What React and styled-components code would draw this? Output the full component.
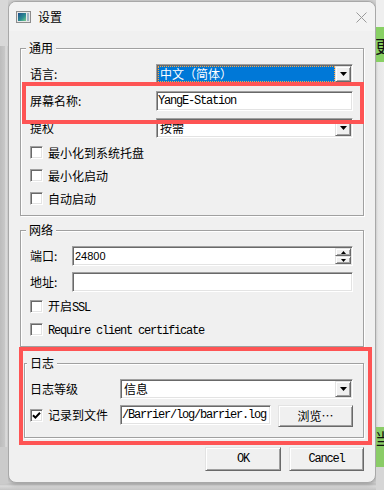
import React from 'react';
import styled, { createGlobalStyle, css } from 'styled-components';

const CJK = `"Noto Sans CJK SC", "Liberation Sans", sans-serif`;
const MONO = `"Liberation Mono", "Noto Sans CJK SC", monospace`;

const GlobalStyle = createGlobalStyle`
  *, *::before, *::after { box-sizing: border-box; }
  html, body { margin: 0; padding: 0; }
  body { background: #c8c8c8; font-family: ${CJK}; }
`;

const Page = styled.div`
  position: relative;
  width: 384px;
  height: 490px;
  overflow: hidden;
  display: flex;
  align-items: flex-start;
  background: linear-gradient(to bottom, #d4d4d4 0, #d4d4d4 483px, #c2c2c2 484px, #dadada 486px, #c4c4c4 490px);
`;

const LeftStrip = styled.div`
  flex: none;
  width: 8px;
  height: 483px;
  display: flex;
  flex-direction: column;
`;

const Seg = styled.div`
  flex: ${p => (p.$h ? 'none' : '1')};
  height: ${p => (p.$h ? `${p.$h}px` : 'auto')};
  background: ${p => p.$bg};
  overflow: hidden;
  position: relative;
`;

const RightStrip = styled.div`
  flex: none;
  width: 8px;
  height: 490px;
  display: flex;
  flex-direction: column;
`;

const BgGlyph = styled.span`
  display: block;
  margin-left: -1px;
  margin-top: ${p => p.$mt}px;
  font: ${p => p.$size}px/1 ${CJK};
  color: #111;
  white-space: nowrap;
`;

const Window = styled.div`
  flex: none;
  width: 368px;
  height: 482px;
  margin-top: 1px;
  border: 1px solid #a8a8a8;
  border-radius: 8px;
  background: #f0f0f0;
  box-shadow: 0 1px 5px rgba(0, 0, 0, 0.28);
  display: flex;
  flex-direction: column;
  overflow: hidden;
`;

const TitleBar = styled.div`
  flex: none;
  height: 29px;
  background: #f3f3f3;
  display: flex;
  align-items: center;
  padding: 0 8px 0 7px;
`;

const Title = styled.span`
  margin-left: 7px;
  font: 12px/16px ${CJK};
  color: #000;
`;

const CloseBtn = styled.span`
  margin-left: auto;
  display: flex;
  width: 11px;
  height: 11px;
  margin-top: 1px;
`;

const Body = styled.div`
  flex: 1;
  display: flex;
  flex-direction: column;
  padding: 17px 11px 0 11px;
`;

const Group = styled.div`
  position: relative;
  display: flex;
  flex-direction: column;
  margin-top: ${p => p.$mt || 0}px;
  margin-left: ${p => p.$ml || 0}px;
  padding: ${p => p.$pad};
  border: 1px solid #a0a0a0;
  box-shadow: inset 1px 1px #fff, 1px 1px #fff;
`;

const Legend = styled.span`
  position: absolute;
  top: -8px;
  left: ${p => p.$left}px;
  padding: 0 3px;
  background: #f0f0f0;
  font: 12px/14px ${CJK};
  color: #000;
`;

const FieldRow = styled.div`
  display: flex;
  align-items: ${p => p.$align || 'center'};
  height: ${p => p.$h || 20}px;
  margin-top: ${p => p.$mt || 0}px;
`;

const Label = styled.span`
  flex: none;
  width: ${p => p.$w}px;
  font: 12px/20px ${CJK};
  color: #000;
  white-space: nowrap;
`;

const sunken = css`
  background: #fff;
  border: 1px solid;
  border-color: #a0a0a0 #fff #fff #a0a0a0;
  box-shadow: inset 1px 1px #696969, inset -1px -1px #e3e3e3;
`;

const raised = css`
  background: #f0f0f0;
  border: 1px solid;
  border-color: #e3e3e3 #696969 #696969 #e3e3e3;
  box-shadow: inset 1px 1px #fff, inset -1px -1px #a0a0a0;
`;

const ComboBox = styled.div`
  ${sunken};
  flex: 1;
  height: 20px;
  display: flex;
  padding: 1px;
`;

const ComboValue = styled.span`
  flex: 1;
  font: 12px/14px ${CJK};
  white-space: nowrap;
  overflow: hidden;
  ${p =>
    p.$selected
      ? css`
          background: #0078d7;
          color: #fff;
          border: 1px dotted #ffa640;
          padding-left: 1px;
        `
      : css`
          color: #000;
          line-height: 16px;
          padding-left: 2px;
        `}
`;

const ArrowBtn = styled.span`
  ${raised};
  flex: none;
  width: 16px;
  height: 16px;
  display: flex;
  align-items: center;
  justify-content: center;
`;

const TextBox = styled.div`
  ${sunken};
  flex: ${p => (p.$w ? 'none' : '1')};
  width: ${p => (p.$w ? `${p.$w}px` : 'auto')};
  height: 20px;
  padding: 0 0 0 ${p => p.$pl ?? 2}px;
  display: flex;
  align-items: center;
  overflow: hidden;
  white-space: nowrap;
`;

const MonoText = styled.span`
  font: 12px/18px ${MONO};
  letter-spacing: -1.2px;
  color: #000;
`;

const SansText = styled.span`
  font: 11px/18px "Liberation Sans", sans-serif;
  color: #000;
`;

const SpinBtns = styled.span`
  margin-left: auto;
  flex: none;
  width: 16px;
  height: 16px;
  margin-right: 1px;
  display: flex;
  flex-direction: column;
`;

const SpinBtn = styled.span`
  ${raised};
  flex: 1;
  display: flex;
  align-items: center;
  justify-content: center;
`;

const CheckRow = styled.div`
  display: flex;
  align-items: center;
  height: ${p => p.$h || 23}px;
  width: ${p => (p.$w ? `${p.$w}px` : 'auto')};
  flex: none;
  margin-top: ${p => p.$mt || 0}px;
  gap: 5px;
`;

const Box = styled.span`
  ${sunken};
  flex: none;
  width: 13px;
  height: 13px;
  display: flex;
  align-items: center;
  justify-content: center;
`;

const CheckText = styled.span`
  font: 12px/16px ${CJK};
  color: #000;
  white-space: nowrap;
`;

const PushButton = styled.button`
  ${raised};
  flex: none;
  width: ${p => p.$w}px;
  height: ${p => p.$h}px;
  margin-left: ${p => p.$ml || 0}px;
  padding: 0;
  display: flex;
  align-items: center;
  justify-content: center;
  font: ${p => (p.$mono ? `12px/16px ${MONO}` : `12px/16px ${CJK}`)};
  letter-spacing: ${p => (p.$mono ? '-1.2px' : '0')};
  color: #000;
`;

const ButtonRow = styled.div`
  display: flex;
  justify-content: flex-end;
  gap: 8px;
  margin-top: 9px;
`;

const Annotation = styled.div`
  position: absolute;
  left: ${p => p.$x}px;
  top: ${p => p.$y}px;
  width: ${p => p.$w}px;
  height: ${p => p.$h}px;
  border: 4px solid #fe5454;
  pointer-events: none;
`;

const Latin = styled.span`
  font: 12px/16px ${MONO};
  letter-spacing: -1.2px;
`;

const DownArrow = () => (
  <svg width="7" height="4" viewBox="0 0 7 4">
    <path d="M0 0H7L3.5 4Z" fill="#000" />
  </svg>
);

const TinyArrow = ({ up }) => (
  <svg width="5" height="3" viewBox="0 0 5 3">
    <path d={up ? 'M0 3H5L2.5 0Z' : 'M0 0H5L2.5 3Z'} fill="#000" />
  </svg>
);

const Check = () => (
  <svg width="9" height="9" viewBox="0 0 9 9">
    <path d="M1 4.2L3.4 6.6L8 1.8" stroke="#000" strokeWidth="2" fill="none" />
  </svg>
);

const AppIcon = () => (
  <svg width="15" height="12" viewBox="0 0 15 12">
    <defs>
      <linearGradient id="ig" x1="0" y1="0" x2="1" y2="1">
        <stop offset="0" stopColor="#1d4f8c" />
        <stop offset="0.6" stopColor="#2e8f93" />
        <stop offset="1" stopColor="#7ccf8a" />
      </linearGradient>
    </defs>
    <rect x="0.5" y="0.5" width="14" height="11" fill="#e8e8e8" stroke="#8c8c8c" />
    <rect x="2" y="2" width="8" height="8" fill="url(#ig)" />
    <rect x="11" y="2" width="2" height="8" fill="#9fb4c4" />
  </svg>
);

const CloseIcon = () => (
  <svg width="11" height="11" viewBox="0 0 11 11">
    <path d="M0.5 0.5L10.5 10.5M10.5 0.5L0.5 10.5" stroke="#9a9a9a" strokeWidth="1" />
  </svg>
);

const Combo = ({ value, selected }) => (
  <ComboBox>
    <ComboValue $selected={selected}>{value}</ComboValue>
    <ArrowBtn>
      <DownArrow />
    </ArrowBtn>
  </ComboBox>
);

const CheckItem = ({ label, checked, mt, h, w }) => (
  <CheckRow $mt={mt} $h={h} $w={w}>
    <Box>{checked && <Check />}</Box>
    <CheckText>{label}</CheckText>
  </CheckRow>
);

export default function App() {
  return (
    <>
      <GlobalStyle />
      <Page>
        <LeftStrip>
          <Seg $h={46} $bg="#d8d8d8" />
          <Seg $bg="linear-gradient(to right, #bcbcbc 0, #c8c8c8 5px, #e4e4e4 6px, #cdcdcd 7px)" />
          <Seg $h={36} $bg="#cbcbcb" />
        </LeftStrip>

        <Window>
          <TitleBar>
            <AppIcon />
            <Title>设置</Title>
            <CloseBtn>
              <CloseIcon />
            </CloseBtn>
          </TitleBar>

          <Body>
            <Group $pad="15px 10px 5px 9px">
              <Legend $left={5}>通用</Legend>
              <FieldRow>
                <Label $w={126}>语言:</Label>
                <Combo value="中文（简体）" selected />
              </FieldRow>
              <FieldRow $mt={7}>
                <Label $w={126}>屏幕名称:</Label>
                <TextBox $pl={1}>
                  <MonoText>YangE-Station</MonoText>
                </TextBox>
              </FieldRow>
              <FieldRow $mt={7}>
                <Label $w={126}>提权</Label>
                <Combo value="按需" />
              </FieldRow>
              <CheckItem mt={3} label="最小化到系统托盘" />
              <CheckItem label="最小化启动" />
              <CheckItem label="自动启动" />
            </Group>

            <Group $mt={14} $pad="15px 10px 5px 9px">
              <Legend $left={5}>网络</Legend>
              <FieldRow>
                <Label $w={42}>端口:</Label>
                <TextBox $pl={2}>
                  <SansText>24800</SansText>
                  <SpinBtns>
                    <SpinBtn>
                      <TinyArrow up />
                    </SpinBtn>
                    <SpinBtn>
                      <TinyArrow />
                    </SpinBtn>
                  </SpinBtns>
                </TextBox>
              </FieldRow>
              <FieldRow $mt={6}>
                <Label $w={42}>地址:</Label>
                <TextBox />
              </FieldRow>
              <CheckItem
                mt={3}
                label={
                  <>
                    开启<Latin>SSL</Latin>
                  </>
                }
              />
              <CheckItem label={<Latin>Require client certificate</Latin>} />
            </Group>

            <Group $mt={16} $ml={4} $pad="15px 10px 10px 5px">
              <Legend $left={2}>日志</Legend>
              <FieldRow>
                <Label $w={90}>日志等级</Label>
                <Combo value="信息" />
              </FieldRow>
              <FieldRow $mt={6} $h={22} $align="flex-start">
                <CheckItem h={20} w={90} label="记录到文件" checked />
                <TextBox $w={151} $pl={1}>
                  <MonoText>/Barrier/log/barrier.log</MonoText>
                </TextBox>
                <PushButton $w={75} $h={22} $ml={7}>
                  浏览…
                </PushButton>
              </FieldRow>
            </Group>

            <ButtonRow>
              <PushButton $w={76} $h={24} $mono>
                OK
              </PushButton>
              <PushButton $w={75} $h={24} $mono>
                Cancel
              </PushButton>
            </ButtonRow>
          </Body>
        </Window>

        <RightStrip>
          <Seg $h={27} $bg="#efefef" />
          <Seg $h={35} $bg="#88d064">
            <BgGlyph $size={17} $mt={10}>更</BgGlyph>
          </Seg>
          <Seg $bg="linear-gradient(to right, #cfcfcf 0, #e6e6e6 2px, #ececec 8px)" />
          <Seg $h={40} $bg="#8acc67">
            <BgGlyph $size={16} $mt={3}>当</BgGlyph>
          </Seg>
          <Seg $h={23} $bg="#d6d6d6" />
        </RightStrip>

        <Annotation $x={22} $y={82} $w={342} $h={42} />
        <Annotation $x={19} $y={347} $w={353} $h={98} />
      </Page>
    </>
  );
}
